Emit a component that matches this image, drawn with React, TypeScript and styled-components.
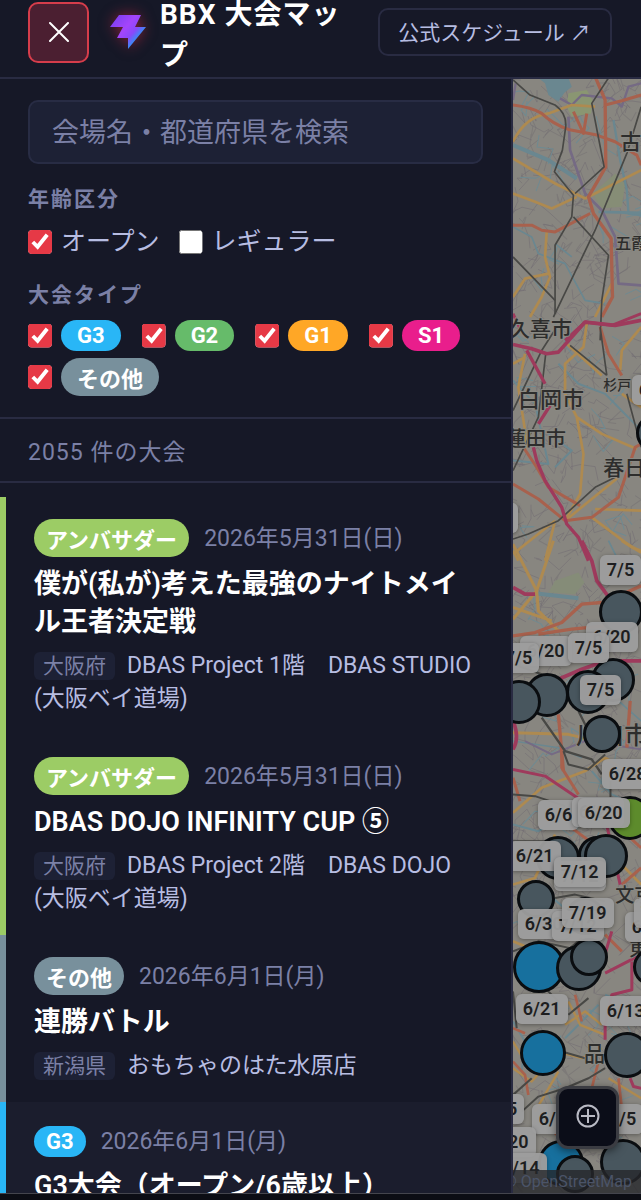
import React, { useState } from 'react';
import styled, { createGlobalStyle } from 'styled-components';

const GlobalStyle = createGlobalStyle`
  *, *::before, *::after { box-sizing: border-box; }
  body {
    margin: 0;
    background: #0c0d14;
    color: #f1f2fb;
    font-family: Roboto, "Noto Sans CJK JP", sans-serif;
  }
`;

const Shell = styled.div`
  display: flex;
  flex-direction: column;
  height: 100vh;
  padding-bottom: 6px;
  overflow: hidden;
`;

const Header = styled.header`
  display: flex;
  align-items: center;
  flex: none;
  height: 79px;
  padding: 0 29px 13px 28px;
  background: #161827;
  border-bottom: 2px solid #292b42;
`;

const CloseButton = styled.button`
  display: grid;
  place-items: center;
  flex: none;
  width: 61px;
  height: 61px;
  padding: 0;
  border: 2px solid #d63d4b;
  border-radius: 10px;
  background: #4b1f31;
  color: #fff;
`;

const Logo = styled.svg`
  flex: none;
  width: 44px;
  height: 44px;
  margin: 0 11px 0 16px;
  overflow: visible;
  filter: drop-shadow(0 0 7px rgba(230, 40, 70, 0.55));
`;

const Title = styled.h1`
  flex: 1;
  min-width: 0;
  margin: 0 16px 0 0;
  padding-top: 6px;
  font-size: 28px;
  line-height: 41px;
  font-weight: 700;
  letter-spacing: 1px;
  color: #fff;
`;

const ScheduleLink = styled.a`
  flex: none;
  padding: 7px 19px 5px 18px;
  border: 2px solid #292b42;
  border-radius: 10px;
  color: #b7bde2;
  font-size: 21px;
  line-height: 32px;
  text-decoration: none;
  white-space: nowrap;
`;

const Body = styled.div`
  display: flex;
  flex: 1;
  min-height: 0;
  border-bottom: 1px solid #44454d;
`;

const Sidebar = styled.aside`
  display: flex;
  flex-direction: column;
  flex: none;
  width: 80%;
  background: #161827;
  border-right: 2px solid #292b42;
`;

const Filters = styled.form`
  padding: 21px 28px;
  border-bottom: 2px solid #292b42;
`;

const SearchInput = styled.input`
  display: block;
  width: 100%;
  height: 64px;
  padding: 2px 22px 0;
  border: 2px solid #282c44;
  border-radius: 10px;
  background: #1d2135;
  color: #f1f2fb;
  font: inherit;
  font-size: 27px;
  &::placeholder { color: #7b80a6; opacity: 1; }
`;

const Group = styled.fieldset`
  min-width: 0;
  margin: 20px 0 0;
  padding: 0;
  border: 0;
`;

const GroupTitle = styled.legend`
  padding: 0;
  color: #7b80a6;
  font-size: 21px;
  line-height: 30px;
  font-weight: 700;
  letter-spacing: 2px;
`;

const Options = styled.div<{ $gap: number }>`
  display: flex;
  flex-wrap: wrap;
  gap: 7px ${p => p.$gap}px;
  padding-top: 10px;
`;

const Option = styled.label`
  display: flex;
  align-items: center;
  gap: 9px;
  color: #b7bde2;
  font-size: 25px;
  line-height: 36px;
`;

const Check = styled.input`
  flex: none;
  width: 24px;
  height: 24px;
  margin: 0;
  accent-color: #e63946;
  clip-path: inset(0 round 4px);
`;

const Chip = styled.span<{ $color: string; $pad: number }>`
  padding: 3px ${p => p.$pad}px;
  border-radius: 20px;
  background: ${p => p.$color};
  color: #fff;
  font-size: 22px;
  line-height: normal;
  font-weight: 700;
`;

const Count = styled.p`
  margin: 0;
  padding: 17px 28px 11px;
  border-bottom: 2px solid #292b42;
  color: #7b80a6;
  font-size: 23px;
  line-height: 34px;
  letter-spacing: 1px;
`;

const List = styled.ul`
  flex: 1;
  min-height: 0;
  margin: 0;
  padding: 14px 0 0;
  overflow: hidden;
  list-style: none;
`;

const Item = styled.li<{ $color: string; $lit?: boolean }>`
  padding: 22px 28px 20px;
  border-left: 6px solid ${p => p.$color};
  background: ${p => (p.$lit ? '#1b1d2d' : 'transparent')};
`;

const ItemHead = styled.div`
  display: flex;
  align-items: center;
  gap: 15px;
`;

const EventDate = styled.time`
  color: #7b80a6;
  font-size: 23px;
  line-height: 35px;
`;

const EventName = styled.h2`
  margin: 8px 0;
  font-size: 27px;
  line-height: 38px;
  font-weight: 600;
  color: #fff;
`;

const Venue = styled.p`
  margin: 0;
  color: #b7bde2;
  font-size: 23px;
  line-height: 33px;
`;

const Prefecture = styled.span`
  display: inline-block;
  margin-right: 12px;
  padding: 0 9px;
  border-radius: 6px;
  background: #1d2135;
  color: #7b80a6;
  font-size: 21px;
  line-height: 28px;
`;

const MapPane = styled.main`
  position: relative;
  flex: 1;
  min-width: 0;
  overflow: hidden;
  background: #888680;
`;

const MapDrawing = styled.svg`
  display: block;
  width: 100%;
  height: 100%;
`;

const Pin = styled.button<{ $x: number; $y: number; $d: number; $color: string }>`
  position: absolute;
  left: ${p => p.$x - p.$d / 2}px;
  top: ${p => p.$y - p.$d / 2}px;
  width: ${p => p.$d}px;
  height: ${p => p.$d}px;
  padding: 0;
  border: 3px solid #0a0d10;
  border-radius: 50%;
  background: ${p => p.$color};
`;

const DateTag = styled.span<{ $x: number; $y: number }>`
  position: absolute;
  left: ${p => p.$x}px;
  top: ${p => p.$y}px;
  padding: 0 7px;
  border-radius: 6px;
  background: rgba(157, 157, 157, 0.96);
  box-shadow: 0 1px 4px rgba(0, 0, 0, 0.35);
  color: #1d1e20;
  font-size: 18px;
  line-height: 30px;
  font-weight: 600;
  white-space: nowrap;
`;

const LocateButton = styled.button`
  position: absolute;
  right: 22px;
  bottom: 44px;
  display: grid;
  place-items: center;
  width: 63px;
  height: 63px;
  padding: 0 0 3px;
  border: 3px solid #3b3c42;
  border-radius: 12px;
  background: #0b0d18;
  box-shadow: 0 2px 8px rgba(0, 0, 0, 0.5);
  color: #b9bac4;
`;

const Attribution = styled.div`
  position: absolute;
  right: 0;
  bottom: 0;
  left: 0;
  display: flex;
  justify-content: flex-end;
  padding: 0 9px;
  background: rgba(38, 39, 43, 0.8);
  color: #4b5468;
  font-size: 16px;
  line-height: 23px;
  white-space: nowrap;
  a { color: inherit; text-decoration: none; }
`;

const RED = '#a8614d';
const ORANGE = '#ae8a50';
const PINK = '#9e3a5c';
const RAIL = '#484845';
const PURPLE = '#756a84';
const WATER = '#6a8790';

type Road = [string, number, string];

/* Each stretch of the map is drawn on its own grid, three units to the pixel. */
const stretches: { y: number; fills: [string, string][]; roads: Road[] }[] = [
  {
    y: -9,
    fills: [
      [WATER, 'M100 24H190L200 50L178 68L160 95L130 75L120 40Z'],
      ['#8a9672', 'M190 70L245 60L262 90L258 130L200 140L185 110Z'],
      ['#868d76', 'M262 370L330 310L360 340L350 410L290 415Z'],
    ],
    roads: [
      [WATER, 12, 'M24 225L130 270L215 325'],
      [WATER, 7, 'M325 150L345 270L365 360L370 430L408 435'],
      [WATER, 8, 'M280 425L408 428'],
      [WATER, 5, 'M24 470L80 500L100 550L180 580L240 690L300 700M150 520L200 560'],
      [PURPLE, 8, 'M190 140L195 240L240 370L290 420L330 500L340 640L408 645'],
      [PURPLE, 7, 'M165 85L200 105L230 75L320 85L350 110L370 50L408 40M24 90L32 40'],
      [ORANGE, 8, 'M24 215Q60 140 130 130L200 105L270 110M24 265L150 340L240 385L408 300'],
      [ORANGE, 8, 'M24 370L90 395L140 415L215 380M125 485L120 560L135 620L110 680L75 740M24 680L60 625L130 610M320 640L270 740'],
      [RED, 9, 'M24 105Q80 112 110 130Q140 160 190 178L275 195L330 215L395 255L408 285'],
      [RED, 10, 'M270 20L300 90L302 290L250 380L265 430L318 505L322 680L290 740'],
      [RED, 9, 'M24 465L80 465L110 480L150 485L255 430M300 105L350 92L408 75M205 125L235 190L245 130'],
      [RAIL, 5, 'M24 30L75 75L150 105Q185 130 182 170L172 240L148 305L205 375L200 440L150 525L150 730'],
      [RAIL, 5, 'M310 24L260 100L297 290L210 370'],
      [RAIL, 5, 'M408 110L365 250L270 480L145 740M205 440L310 555L290 690L285 810M24 560L150 690'],
      [PINK, 9, 'M24 730L45 775M180 810L240 755L320 765L408 730'],
    ],
  },
  {
    y: 241,
    fills: [],
    roads: [
      [WATER, 6, 'M24 180L90 250L130 430L24 420M160 130L220 190L300 220L408 330M130 340L200 390L150 440'],
      [ORANGE, 8, 'M245 10L235 80L180 130L180 220L215 290L235 400L225 520L180 600M215 290L290 340L395 385'],
      [ORANGE, 8, 'M185 70L290 165M60 100L40 200L60 330L60 390M24 130L60 110M24 690L40 720M150 600L120 720M270 565L408 570M340 470L180 600M260 590L380 680L408 690M408 20L350 90L345 150M350 220L408 260M24 700L150 600'],
      [RED, 9, 'M24 490L100 535L180 600L260 590L340 530L390 380L408 370M285 20L310 100L350 165M55 380L95 440L130 500L225 555'],
      [RAIL, 5, 'M155 20L110 90L24 270M24 655L70 640L160 600L270 500L330 470M195 75L305 165M365 220L408 380M24 450L100 290L122 100M285 20L305 165'],
      [PINK, 11, 'M24 72L80 85L125 100L160 95L240 5L330 15L408 0'],
      [PINK, 10, 'M65 90L120 190M135 255L100 310M85 380L95 420L120 480L170 560L185 610L220 650L250 720'],
    ],
  },
  {
    y: 461,
    fills: [['#858c78', 'M150 120L220 95L238 125L210 160L130 155Z']],
    roads: [
      [WATER, 12, 'M95 158L220 172M24 440L110 520'],
      [WATER, 5, 'M310 0L340 60L408 90M24 600L160 620L230 650M340 480L408 540'],
      [ORANGE, 9, 'M24 10L95 150L100 210L160 270M145 0L95 150L24 235M24 200L140 240M350 0L408 35M24 575L190 580L270 600'],
      [PURPLE, 6, 'M60 600L140 640L240 600L408 625'],
      [RED, 10, 'M24 285L90 275L170 245L230 190L290 185M100 280L200 265L300 255M330 170L408 135M160 520L175 690M375 480L365 620'],
      [PINK, 11, 'M230 0L260 60L275 120L315 175M160 415L230 385L300 360L408 360M24 140L60 160L90 160M24 540Q45 590 24 625'],
      [RAIL, 7, 'M110 530L180 630L260 655L290 700M220 510L260 590M24 370L110 400L150 410'],
    ],
  },
  {
    y: 671,
    fills: [],
    roads: [
      [ORANGE, 8, 'M24 185L110 110L240 60L300 20M24 400L90 380L150 250M300 20L408 90M24 570L120 610M340 330L408 400'],
      [WATER, 6, 'M24 220L100 240L200 180M260 60L320 130L408 170M130 430L190 480'],
      [RED, 9, 'M170 0L170 50L220 130M24 80L45 150M310 200L408 290M200 230L280 290M350 400L408 350M300 550L350 600'],
      [RAIL, 6, 'M24 130L90 135L180 165M175 0L190 40L250 55L300 10M24 600L100 570L240 600M316 90V140M24 270H120M150 440L210 430L300 450M230 560L160 620'],
      [PINK, 9, 'M24 55L120 75L210 135L300 200L345 400M300 665L408 610M290 640L320 540'],
    ],
  },
  {
    y: 881,
    fills: [],
    roads: [
      [WATER, 6, 'M180 230L230 180L280 130M24 180L60 240L50 330M300 100L350 120'],
      [ORANGE, 7, 'M24 320L80 360L160 270L230 290L290 260M190 120L225 190L300 220M24 240L60 300M90 450L160 330M180 190L240 150L290 190M310 350L408 410'],
      [RED, 8, 'M280 300L260 380L150 520M24 200L60 215M24 300L60 340L70 400M340 350L350 440M210 100L230 180'],
      [RAIL, 6, 'M50 450L100 405L180 380L250 350L300 320M190 160L250 110M170 270L240 290M24 400L80 350M24 90L35 200M120 80L160 120'],
      [PINK, 9, 'M300 235L300 190L320 100L380 85L380 0M375 350L385 375L408 380'],
    ],
  },
];

/* Side streets and ditches, scattered from a fixed seed. */
function sideStreets(seed: number, count: number, reach: number) {
  let s = seed;
  const next = () => {
    s = (s * 1103515245 + 12345) % 2147483648;
    return s / 2147483648;
  };
  let d = '';
  for (let i = 0; i < count; i++) {
    let x = next() * 128;
    let y = next() * 1114;
    d += `M${x.toFixed(0)} ${y.toFixed(0)}`;
    for (let k = 0; k < 3; k++) {
      x += (next() - 0.5) * reach;
      y += (next() - 0.5) * reach;
      d += `L${x.toFixed(0)} ${y.toFixed(0)}`;
    }
  }
  return d;
}

const streets = sideStreets(7, 420, 30);
const lanes = sideStreets(41, 160, 26);
const ditches = sideStreets(99, 70, 34);

const places: [string, number, number, number][] = [
  ['古河', 107, 70, 21],
  ['五霞', 102, 170, 16],
  ['久喜市', -4, 257, 21],
  ['白岡市', 5, 327, 22],
  ['杉戸', 90, 311, 14],
  ['蓮田市', -7, 366, 20],
  ['春日部', 90, 395, 21],
  ['川口市', 63, 664, 24],
  ['文京', 102, 822, 19],
  ['東京', 116, 876, 19],
  ['品川', 71, 980, 21],
];

const GRAY = '#48565e';
const BLUE = '#17709e';

const pins: [number, number, number, string][] = [
  [142, 354, 38, GRAY],
  [108, 533, 44, GRAY],
  [100, 601, 44, GRAY],
  [75, 613, 44, GRAY],
  [34, 616, 44, GRAY],
  [6, 623, 44, GRAY],
  [89, 655, 38, GRAY],
  [117, 739, 44, '#5d8b2c'],
  [45, 779, 44, GRAY],
  [84, 776, 38, GRAY],
  [93, 777, 44, GRAY],
  [23, 820, 38, GRAY],
  [72, 837, 38, GRAY],
  [26, 888, 52, BLUE],
  [66, 889, 46, GRAY],
  [76, 878, 38, GRAY],
  [139, 888, 38, GRAY],
  [30, 974, 46, BLUE],
  [114, 976, 46, GRAY],
  [48, 1084, 46, BLUE],
  [62, 1095, 38, GRAY],
  [110, 1083, 46, GRAY],
];

const tags: [string, number, number][] = [
  ['6/20', 119, 296],
  ['7/12', -47, 424],
  ['7/5', 87, 476],
  ['6/20', 73, 543],
  ['6/20', 7, 557],
  ['7/5', 55, 554],
  ['7/5', -15, 564],
  ['7/5', 67, 596],
  ['6/28', 89, 680],
  ['6/6', 25, 721],
  ['6/20', 59, 718],
  ['6/20', 65, 719],
  ['6/21', -4, 762],
  ['7/12', 41, 782],
  ['7/12', 41, 778],
  ['6/30', 5, 830],
  ['7/12', 39, 832],
  ['7/19', 49, 819],
  ['6/20', 112, 833],
  ['7/5', 121, 819],
  ['6/21', 3, 915],
  ['6/13', 87, 917],
  ['7/5', -30, 1015],
  ['6/7', 19, 1025],
  ['7/5', 89, 1025],
  ['6/20', -29, 1048],
  ['6/14', -18, 1074],
];

const types = [
  { name: 'G3', color: '#29b6f6' },
  { name: 'G2', color: '#66bb6a' },
  { name: 'G1', color: '#ffa726' },
  { name: 'S1', color: '#e91e8c' },
  { name: 'その他', color: '#78909c' },
];

const events = [
  {
    type: 'アンバサダー',
    color: '#9ccc65',
    date: '2026年5月31日(日)',
    iso: '2026-05-31',
    name: '僕が(私が)考えた最強のナイトメイル王者決定戦',
    prefecture: '大阪府',
    venue: 'DBAS Project 1階　DBAS STUDIO (大阪ベイ道場)',
  },
  {
    type: 'アンバサダー',
    color: '#9ccc65',
    date: '2026年5月31日(日)',
    iso: '2026-05-31',
    name: 'DBAS DOJO INFINITY CUP ⑤',
    prefecture: '大阪府',
    venue: 'DBAS Project 2階　DBAS DOJO (大阪ベイ道場)',
  },
  {
    type: 'その他',
    color: '#78909c',
    date: '2026年6月1日(月)',
    iso: '2026-06-01',
    name: '連勝バトル',
    prefecture: '新潟県',
    venue: 'おもちゃのはた水原店',
  },
  {
    type: 'G3',
    color: '#29b6f6',
    date: '2026年6月1日(月)',
    iso: '2026-06-01',
    name: 'G3大会（オープン/6歳以上）',
    lit: true,
  },
];

export default function App() {
  const [query, setQuery] = useState('');
  return (
    <Shell>
      <GlobalStyle />
      <Header>
        <CloseButton type="button" aria-label="閉じる">
          <svg width="20" height="20" viewBox="0 0 20 20" fill="none" stroke="currentColor" strokeWidth="2" strokeLinecap="round">
            <path d="M1 1L19 19M19 1L1 19" />
          </svg>
        </CloseButton>
        <Logo viewBox="0 0 44 44" aria-hidden="true">
          <defs>
            <linearGradient id="bolt" x1="8" y1="8" x2="38" y2="34" gradientUnits="userSpaceOnUse">
              <stop offset="0" stopColor="#7c3ff0" />
              <stop offset="0.4" stopColor="#a445fb" />
              <stop offset="0.62" stopColor="#8a48fa" />
              <stop offset="0.78" stopColor="#3f86f6" />
              <stop offset="1" stopColor="#6a4af0" />
            </linearGradient>
          </defs>
          <path d="M14 5H36L30 17H41L23 39V28H12L18 17H5Z" fill="url(#bolt)" />
        </Logo>
        <Title>BBX 大会マップ</Title>
        <ScheduleLink href="#schedule">公式スケジュール ↗</ScheduleLink>
      </Header>
      <Body>
        <Sidebar>
          <Filters onSubmit={e => e.preventDefault()}>
            <SearchInput
              type="text"
              aria-label="会場名・都道府県を検索"
              placeholder="会場名・都道府県を検索"
              value={query}
              onChange={e => setQuery(e.target.value)}
            />
            <Group>
              <GroupTitle>年齢区分</GroupTitle>
              <Options $gap={19}>
                <Option>
                  <Check type="checkbox" defaultChecked />
                  オープン
                </Option>
                <Option>
                  <Check type="checkbox" />
                  レギュラー
                </Option>
              </Options>
            </Group>
            <Group>
              <GroupTitle>大会タイプ</GroupTitle>
              <Options $gap={21}>
                {types.map(t => (
                  <Option key={t.name}>
                    <Check type="checkbox" defaultChecked />
                    <Chip $color={t.color} $pad={16}>{t.name}</Chip>
                  </Option>
                ))}
              </Options>
            </Group>
          </Filters>
          <Count>2055 件の大会</Count>
          <List>
            {events.map((e, i) => (
              <Item key={i} $color={e.color} $lit={e.lit}>
                <ItemHead>
                  <Chip $color={e.color} $pad={12}>{e.type}</Chip>
                  <EventDate dateTime={e.iso}>{e.date}</EventDate>
                </ItemHead>
                <EventName>{e.name}</EventName>
                {e.venue && (
                  <Venue>
                    <Prefecture>{e.prefecture}</Prefecture>
                    {e.venue}
                  </Venue>
                )}
              </Item>
            ))}
          </List>
        </Sidebar>
        <MapPane>
          <MapDrawing viewBox="0 0 128 1114" preserveAspectRatio="xMinYMin slice" fill="none" strokeLinejoin="round">
            <path d={lanes} stroke="#7d7a78" strokeWidth="1" />
            <path d={streets} stroke="#736e74" strokeWidth="0.6" />
            <path d={ditches} stroke="#6f8a91" strokeWidth="1" />
            {stretches.map(s => (
              <g key={s.y} transform={`translate(-8 ${s.y}) scale(0.3333)`}>
                {s.fills.map(([color, d]) => (
                  <path key={d} d={d} fill={color} />
                ))}
                {s.roads.map(([color, width, d]) => (
                  <path key={d} d={d} stroke={color} strokeWidth={width} />
                ))}
              </g>
            ))}
            <g fill="#2d2d2c" stroke="#8a8983" strokeWidth="2" paintOrder="stroke" fontWeight="500" fontFamily='"Noto Sans CJK JP", sans-serif'>
              {places.map(([name, x, y, size]) => (
                <text key={name} x={x} y={y} fontSize={size}>{name}</text>
              ))}
            </g>
          </MapDrawing>
          {pins.map(([x, y, d, color]) => (
            <Pin key={`${x}-${y}`} type="button" aria-label="会場" $x={x} $y={y} $d={d} $color={color} />
          ))}
          {tags.map(([text, x, y]) => (
            <DateTag key={`${x}-${y}`} $x={x} $y={y}>{text}</DateTag>
          ))}
          <Attribution>
            <a href="#osm">© OpenStreetMap</a>
          </Attribution>
          <LocateButton type="button" aria-label="現在地">
            <svg width="24" height="24" viewBox="0 0 24 24" fill="none" stroke="currentColor" strokeWidth="2">
              <circle cx="12" cy="12" r="10.5" />
              <path d="M12 5V19M5 12H19" />
            </svg>
          </LocateButton>
        </MapPane>
      </Body>
    </Shell>
  );
}
